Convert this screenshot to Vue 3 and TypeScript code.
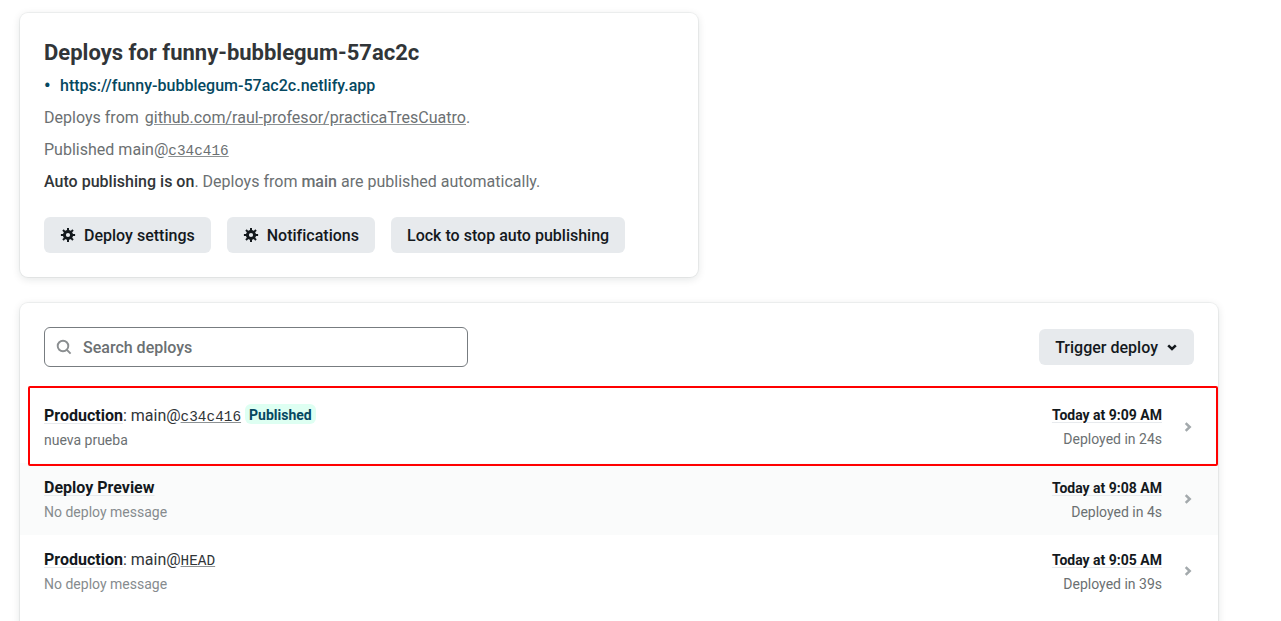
<script setup lang="ts">
interface Deploy {
  context: string
  branch?: string
  commit?: string
  published?: boolean
  message: string
  empty?: boolean
  time: string
  duration: string
}

const deploys: Deploy[] = [
  {
    context: 'Production',
    branch: 'main@',
    commit: 'c34c416',
    published: true,
    message: 'nueva prueba',
    time: 'Today at 9:09 AM',
    duration: 'Deployed in 24s',
  },
  {
    context: 'Deploy Preview',
    message: 'No deploy message',
    empty: true,
    time: 'Today at 9:08 AM',
    duration: 'Deployed in 4s',
  },
  {
    context: 'Production',
    branch: 'main@',
    commit: 'HEAD',
    message: 'No deploy message',
    empty: true,
    time: 'Today at 9:05 AM',
    duration: 'Deployed in 39s',
  },
]

const settingsButtons: string[] = ['Deploy settings', 'Notifications']
const teeth: number[] = [0, 45, 90, 135, 180, 225, 270, 315]
</script>

<template>
  <main class="page">
    <section class="card summary">
      <h1>Deploys for funny-bubblegum-57ac2c</h1>
      <div class="line url">
        <span class="bullet">•</span>
        <a>https://funny-bubblegum-57ac2c.netlify.app</a>
      </div>
      <p class="line">Deploys from <a class="repo">github.com/raul-profesor/practicaTresCuatro</a>.</p>
      <p class="line">Published main@<a class="sha">c34c416</a></p>
      <p class="line"><strong class="dark">Auto publishing is on</strong>. Deploys from <strong>main</strong> are published automatically.</p>
      <div class="actions">
        <button v-for="label in settingsButtons" :key="label" class="btn">
          <svg class="gear" width="16" height="16" viewBox="0 0 16 16">
            <circle cx="8" cy="8" r="3.6" fill="none" stroke="currentColor" stroke-width="3" />
            <path
              v-for="angle in teeth"
              :key="angle"
              d="M7 .9h2v3H7z"
              fill="currentColor"
              :transform="`rotate(${angle} 8 8)`"
            />
          </svg>
          <span>{{ label }}</span>
        </button>
        <button class="btn"><span>Lock to stop auto publishing</span></button>
      </div>
    </section>

    <section class="card list">
      <div class="toolbar">
        <div class="search">
          <svg width="16" height="16" viewBox="0 0 16 16" fill="none" stroke="currentColor" stroke-width="1.9">
            <circle cx="7" cy="7" r="5.3" />
            <path d="M10.9 10.9l3.7 3.7" />
          </svg>
          <span>Search deploys</span>
        </div>
        <button class="btn trigger">
          <span>Trigger deploy</span>
          <svg width="10" height="8" viewBox="0 0 10 8" fill="none" stroke="currentColor" stroke-width="2.6">
            <path d="M1.2 2.4L5 6l3.8-3.6" />
          </svg>
        </button>
      </div>
      <ul class="deploys">
        <li v-for="(deploy, i) in deploys" :key="i" class="row" :class="{ shaded: i === 1 }">
          <div class="info">
            <div class="name">
              <strong>{{ deploy.context }}</strong><template v-if="deploy.commit">: {{ deploy.branch }}<a class="sha">{{ deploy.commit }}</a></template>
              <span v-if="deploy.published" class="badge">Published</span>
            </div>
            <div class="message" :class="{ empty: deploy.empty }">{{ deploy.message }}</div>
          </div>
          <div class="when" :class="{ raised: deploy.published }">
            <div class="time"><strong>{{ deploy.time }}</strong></div>
            <div class="message">{{ deploy.duration }}</div>
          </div>
          <svg class="chevron" width="8" height="10" viewBox="0 0 8 10" fill="none" stroke="currentColor" stroke-width="2.5">
            <path d="M1.7 1.2l4 3.8-4 3.8" />
          </svg>
          <span v-if="deploy.published" class="highlight"></span>
        </li>
      </ul>
    </section>
  </main>
</template>

<style>
body {
  margin: 0;
  background: #fff;
  overflow: hidden;
}
</style>

<style scoped>
.page {
  box-sizing: border-box;
  height: 621px;
  overflow: hidden;
  padding: 13px 20px 0;
  font: 400 16px/24px Roboto, sans-serif;
  color: #6b7072;
}
.card {
  box-sizing: border-box;
  background: #fff;
  border-radius: 8px;
  box-shadow: 0 0 0 1px rgba(14, 30, 37, 0.05), 0 2px 8px rgba(14, 30, 37, 0.12);
}
.summary {
  width: 678px;
  height: 264px;
  padding: 25px 24px 24px;
}
h1 {
  margin: 0 0 6px;
  font-size: 22px;
  line-height: 30px;
  font-weight: 700;
  color: #313538;
}
.line {
  margin: 0 0 8px;
  letter-spacing: 0.014px;
}
.url {
  display: flex;
  color: #054861;
  font-weight: 500;
}
.bullet {
  width: 16px;
  font-size: 18px;
  font-weight: 700;
}
.repo {
  margin-left: 2px;
  text-decoration: underline;
  text-decoration-color: #8d9294;
}
strong {
  font-weight: 500;
}
.dark {
  color: #313538;
}
.sha {
  font-family: "Liberation Mono", monospace;
  font-size: 14.4px;
  line-height: 1;
  letter-spacing: 0;
  text-decoration: underline;
  text-decoration-color: #8d9294;
}
.actions {
  display: flex;
  gap: 16px;
  margin-top: 23px;
}
.btn {
  display: flex;
  align-items: center;
  height: 36px;
  padding: 0 16px;
  border: 0;
  border-radius: 6px;
  background: #e7eaed;
  color: #14191d;
  font: 500 16px/24px Roboto, sans-serif;
  letter-spacing: 0.008px;
  white-space: nowrap;
}
.btn span,
.search span {
  padding-top: 2px;
}
.gear {
  margin-right: 8px;
}
.list {
  width: 1198px;
  height: 340px;
  margin-top: 26px;
  padding-top: 24px;
}
.toolbar {
  display: flex;
  align-items: center;
  justify-content: space-between;
  height: 40px;
  padding: 0 24px;
}
.search {
  box-sizing: border-box;
  display: flex;
  align-items: center;
  gap: 11px;
  width: 424px;
  height: 40px;
  padding: 0 11px;
  border: 1px solid #777c80;
  border-radius: 6px;
  color: #6b7072;
  font-weight: 500;
}
.search svg {
  color: #8a8e90;
}
.trigger {
  padding-right: 17px;
}
.trigger svg {
  margin-left: 9px;
}
.deploys {
  margin: 24px 0 0;
  padding: 0;
  list-style: none;
}
.row {
  position: relative;
  display: flex;
  align-items: center;
  height: 72px;
  padding: 0 26px 0 24px;
}
.shaded {
  background: #fafbfb;
}
.info {
  flex: 1;
  padding-top: 2px;
}
.name {
  display: flex;
  align-items: baseline;
  height: 24px;
  color: #313538;
  white-space: pre;
}
.name strong,
.time strong {
  font-weight: 700;
  color: #14191d;
  text-decoration: underline;
  text-decoration-color: #e7eaed;
  text-decoration-thickness: 1px;
  text-underline-offset: 2px;
}
.badge {
  align-self: flex-start;
  height: 20px;
  margin-left: 4px;
  padding: 0 4px;
  border-radius: 6px;
  background: #defff2;
  color: #054861;
  font-size: 14px;
  line-height: 22px;
  font-weight: 700;
}
.message {
  font-size: 14px;
}
.empty {
  color: #868b8e;
}
.when {
  padding-top: 2px;
  text-align: right;
  font-size: 14px;
}
.raised {
  padding-top: 0;
}
.chevron {
  margin-left: 22px;
  color: #a3a9ac;
}
.highlight {
  position: absolute;
  box-sizing: border-box;
  inset: -5px 0 -3px 8px;
  border: 2px solid #f00;
  border-radius: 2px;
  z-index: 1;
}
</style>
